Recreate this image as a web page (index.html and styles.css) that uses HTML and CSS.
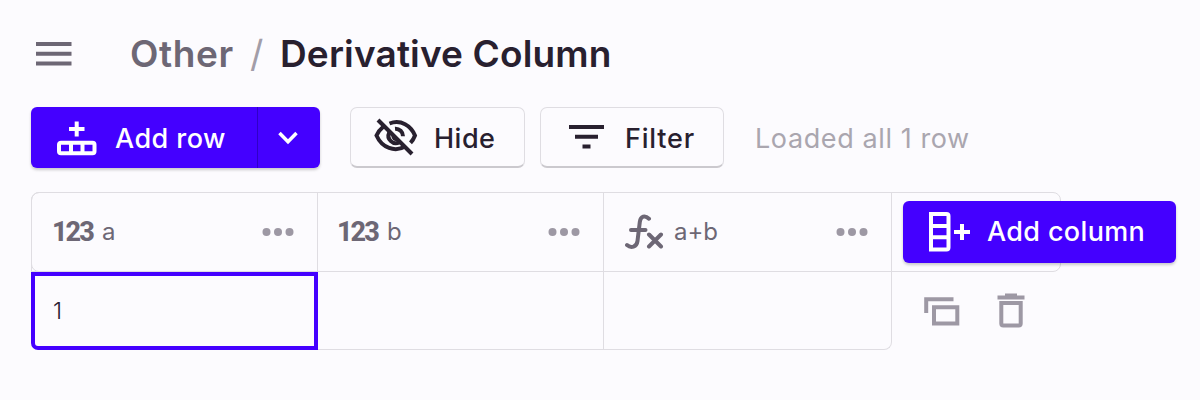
FILE: index.html
```html
<!DOCTYPE html>
<html lang="en">
<head>
<meta charset="utf-8">
<title>Derivative Column</title>
<link rel="stylesheet" href="styles.css">
</head>
<body>
<header class="topbar">
  <svg class="menu" width="36" height="26" viewBox="0 0 36 26"><path d="M0 3h35.500M0 12.700h35.500M0 22.400h35.500"/></svg>
  <h1 class="crumbs"><span class="parent">Other</span><span class="slash">/</span><span class="current">Derivative Column</span></h1>
</header>
<div class="toolbar">
  <div class="split">
    <button class="add-row">
      <svg class="line" width="40" height="36" viewBox="0 0 40 36"><path d="M19.700 1.500v15M12 9h15.500M4 22.700h31.500a2 2 0 0 1 2 2v6.500a2 2 0 0 1-2 2h-31.500a2 2 0 0 1-2-2v-6.500a2 2 0 0 1 2-2zM14 22v12M25.500 22v12"/></svg>
      <span class="label-row">Add row</span>
    </button>
    <button class="more" aria-label="More"><svg class="chevron" width="20" height="14" viewBox="0 0 20 14"><path d="M1.500 2l8.500 8.700L18.500 2"/></svg></button>
  </div>
  <button class="outline hide">
    <svg class="line" width="44" height="38" viewBox="0 0 44 38"><path d="M15.500 5.500C27 1 37 8 41 17.500c-1 2.700-2.500 5.200-4.500 7.300M9.500 8.500C6.500 11 4 14 2.500 17.500 8 30 21 34.500 31 28.500M21 10.700a7.500 7.500 0 0 1 8 7.600M15.200 14.500a7.500 7.500 0 0 0 10.300 9.800M19.500 18.200a2.500 2.500 0 0 0 3 2.700"/><path d="M4 2l34 34"/></svg>
    <span>Hide</span>
  </button>
  <button class="outline filter">
    <svg class="line" width="36" height="26" viewBox="0 0 36 26"><path d="M0 3h35M6 12.700h23M13.500 22.500h8"/></svg>
    <span>Filter</span>
  </button>
  <span class="status">Loaded all 1 row</span>
</div>
<main class="grid">
  <div class="ghost"></div>
  <div class="row head">
    <div class="cell"><b class="type">123</b><span class="name">a</span><svg class="dots" width="32" height="10" viewBox="0 0 32 10"><circle cx="4.500" cy="5" r="4"/><circle cx="16" cy="5" r="4"/><circle cx="27.500" cy="5" r="4"/></svg></div>
    <div class="cell"><b class="type">123</b><span class="name">b</span><svg class="dots" width="32" height="10" viewBox="0 0 32 10"><circle cx="4.500" cy="5" r="4"/><circle cx="16" cy="5" r="4"/><circle cx="27.500" cy="5" r="4"/></svg></div>
    <div class="cell"><svg class="fx" width="39" height="36" viewBox="0 0 39 36"><path d="M24 4.700C20 1 15.500 2 14.800 8L12.500 27C11.800 33 6 34.500 2 31M6 16h14.500M24 20.500L36 32.500M36 20.500L24 32.500"/></svg><span class="name">a+b</span><svg class="dots" width="32" height="10" viewBox="0 0 32 10"><circle cx="4.500" cy="5" r="4"/><circle cx="16" cy="5" r="4"/><circle cx="27.500" cy="5" r="4"/></svg></div>
  </div>
  <div class="row body">
    <div class="cell selected">1</div>
    <div class="cell"></div>
    <div class="cell"></div>
  </div>
  <button class="add-column">
    <svg class="line" width="42" height="40" viewBox="0 0 42 40"><path d="M2 2h15.500a2 2 0 0 1 2 2v31.500a2 2 0 0 1-2 2H2zM2 14h17.500M2 25.300h17.500"/><path d="M25 20h16M33 12v16"/></svg>
    <span>Add column</span>
  </button>
  <div class="actions">
    <svg width="36" height="30" viewBox="0 0 36 30"><path d="M2.200 17V3.200H29.500M10 11.200h23.300v16.300H10z"/></svg>
    <svg width="28" height="36" viewBox="0 0 28 36"><path d="M.5 4.500h27M8 2.500h12M4.300 10h19.400v20.500a2 2 0 0 1-2 2H6.300a2 2 0 0 1-2-2z"/></svg>
  </div>
</main>
</body>
</html>
```
FILE: styles.css
```css
* { box-sizing: border-box; }
body { margin: 0; height: 400px; overflow: hidden; background: #fcfbfe; font-family: Inter, sans-serif; color: #28202f; }
svg { display: block; flex: none; fill: none; stroke: currentColor; stroke-width: 4; }
button { border: 0; margin: 0; padding: 0; font: 500 27px/1 Inter, sans-serif; color: inherit; display: flex; align-items: center; white-space: nowrap; }
.topbar { height: 107px; padding: 0 0 0 36px; display: flex; align-items: center; gap: 58px; }
.menu { color: #6d6775; }
.crumbs { margin: 0; display: flex; font: 600 37px/1 Inter, sans-serif; white-space: nowrap; }
.parent { width: 120px; letter-spacing: 0.6px; color: #6d6775; }
.slash { width: 30px; color: #a29da8; font-weight: 400; }
.current { letter-spacing: 0.15px; }
.toolbar { height: 61px; padding-left: 31px; display: flex; align-items: stretch; }
.split { width: 289px; display: flex; background: #4400ff; color: #fff; border-radius: 6px; box-shadow: 0 2px 3px #0003; margin-right: 30px; }
.add-row { width: 227px; padding-left: 26px; gap: 18px; background: none; border-right: 1px solid #3000c8; letter-spacing: 0.45px; }
.more { flex: 1; justify-content: center; background: none; padding-right: 2px; }
.chevron { stroke-width: 3.5; }
.outline { border: 1.500px solid #dfdde2; border-bottom: 2px solid #cbc9ce; border-radius: 7px; background: transparent; font-weight: 450; }
.hide { width: 175px; padding-left: 23px; gap: 16px; margin-right: 15px; letter-spacing: 0.5px; }
.filter { width: 184px; padding-left: 28px; gap: 20px; letter-spacing: 0.8px; }
.status { align-self: center; margin-left: 31px; font-size: 27px; line-height: 1; letter-spacing: 0.6px; padding-top: 2px; color: #aaa6af; white-space: nowrap; }
.outline span, .add-row span { padding-top: 2px; }
.grid { position: relative; width: 861px; margin: 24px 0 0 31px; }
.ghost { position: absolute; inset: 0 auto auto 0; width: 1030px; height: 80px; border: 1px solid #dfdde2; border-radius: 8px; }
.row { display: grid; grid-template-columns: 287px 286px 288px; }
.head { height: 80px; }
.body { height: 78px; }
.cell { display: flex; align-items: center; padding-left: 21px; border-right: 1.500px solid #dfdde2; border-bottom: 1.500px solid #dfdde2; font-size: 24px; }
.head .cell { border-top: 1.500px solid #dfdde2; color: #6d6775; }
.head .cell:first-child { border-left: 1px solid #dfdde2; border-top-left-radius: 8px; padding-left: 20px; }
.head .cell:nth-child(2) { padding-left: 19px; }
.type { width: 50px; font: 800 27px/1 Roboto, sans-serif; letter-spacing: -2px; }
.name { line-height: 1; }
.dots { margin-left: auto; margin-right: 23px; fill: #9d98a4; stroke: none; }
.fx { margin-right: 10px; stroke-width: 4; stroke-linecap: round; }
.body .selected { border: 4px solid #4400ff; border-bottom-left-radius: 7px; padding-left: 18px; font-size: 23px; font-weight: 300; }
.body .cell:last-child { border-bottom-right-radius: 8px; }
.add-column { position: absolute; left: 872px; top: 9px; width: 273px; height: 62px; padding: 0 0 1px 26px; gap: 16px; background: #4400ff; color: #fff; border-radius: 6px; box-shadow: 0 2px 3px #0003; letter-spacing: 0.35px; }
.actions { position: absolute; left: 893px; top: 101px; display: flex; align-items: center; gap: 37px; color: #9d98a4; }
```
